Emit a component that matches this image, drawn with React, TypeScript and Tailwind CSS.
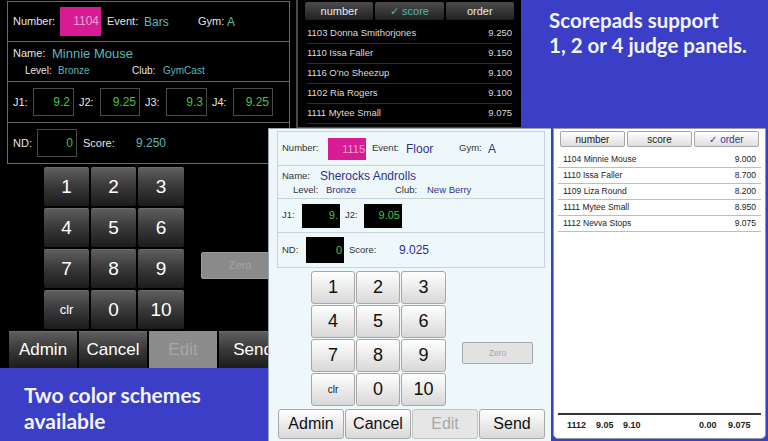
import React from "react";

const darkKey =
  "flex items-center justify-center rounded-[2px] border-t border-[#6e6e6e] bg-linear-to-b from-[#5e5e5e] via-[#383838] to-[#1c1c1c] text-white";
const lightKey =
  "flex items-center justify-center rounded-[3px] border border-[#a8a8a8] bg-linear-to-b from-white to-[#d8d8d8] text-[#111]";

const darkList = [
  ["1103 Donna Smithorjones", "9.250"],
  ["1110 Issa Faller", "9.150"],
  ["1116 O'no Sheezup", "9.100"],
  ["1102 Ria Rogers", "9.100"],
  ["1111 Mytee Small", "9.075"],
];

const lightList = [
  ["1104 Minnie Mouse", "9.000"],
  ["1110 Issa Faller", "8.700"],
  ["1109 Liza Round", "8.200"],
  ["1111 Mytee Small", "8.950"],
  ["1112 Nevva Stops", "9.075"],
];

const keys = ["1", "2", "3", "4", "5", "6", "7", "8", "9", "clr", "0", "10"];

function DarkBox({ value, w }: { value: string; w: string }) {
  return (
    <div className={`${w} h-[28px] border border-[#4a4a4a] bg-black pr-[3px] text-right text-[12px] leading-[26px] text-[#46c046]`}>
      {value}
    </div>
  );
}

function DarkPad() {
  return (
    <div className="absolute left-0 top-0 h-[368px] w-[296px] bg-black font-['Liberation_Sans',sans-serif]">
      {/* form */}
      <div className="ml-[7px] mt-[1px] w-[283px] border border-[#6a6a6a] text-[11px] text-[#e6e6e6]">
        <div className="flex h-[40px] items-center border-b border-[#6a6a6a] pl-[5px]">
          <span className="w-[47px]">Number:</span>
          <div className="h-[29px] w-[41px] bg-[#d81b95] pr-[2px] text-right text-[12px] leading-[29px] text-[#eea6cc]">1104</div>
          <span className="ml-[6px] w-[37px]">Event:</span>
          <span className="w-[54px] text-[12px] text-[#5ab8bc]">Bars</span>
          <span className="w-[29px]">Gym:</span>
          <span className="text-[12px] text-[#5ab8bc]">A</span>
        </div>
        <div className="flex h-[40px] flex-col border-b border-[#6a6a6a] pl-[5px] pt-[2px]">
          <div className="flex h-[19px] items-center">
            <span className="w-[39px]">Name:</span>
            <span className="text-[13px] text-[#5ab8bc]">Minnie Mouse</span>
          </div>
          <div className="flex h-[15px] items-center pl-[12px] text-[10px]">
            <span className="w-[33px]">Level:</span>
            <span className="w-[74px] text-[#5ab8bc]">Bronze</span>
            <span className="w-[31px]">Club:</span>
            <span className="text-[#5ab8bc]">GymCast</span>
          </div>
        </div>
        <div className="flex h-[41px] items-center border-b border-[#6a6a6a] pl-[5px]">
          <span className="w-[20px]">J1:</span>
          <DarkBox value="9.2" w="w-[41px]" />
          <span className="ml-[5px] w-[21px]">J2:</span>
          <DarkBox value="9.25" w="w-[40px]" />
          <span className="ml-[5px] w-[21px]">J3:</span>
          <DarkBox value="9.3" w="w-[41px]" />
          <span className="ml-[5px] w-[21px]">J4:</span>
          <DarkBox value="9.25" w="w-[40px]" />
        </div>
        <div className="flex h-[40px] items-center pl-[5px]">
          <span className="w-[24px]">ND:</span>
          <DarkBox value="0" w="w-[40px]" />
          <span className="ml-[6px] w-[53px]">Score:</span>
          <span className="text-[12px] text-[#5ab8bc]">9.250</span>
        </div>
      </div>

      {/* keypad */}
      <div className="mt-[3px] flex pl-[44px]">
        <div className="grid grid-cols-[45px_45px_46px] gap-[2px]">
          {keys.map((k) => (
            <div key={k} className={`${darkKey} h-[39px] ${k === "clr" ? "text-[13px]" : "text-[19px]"}`}>
              {k}
            </div>
          ))}
        </div>
        <div className="ml-[17px] mt-[85px] flex h-[27px] w-[78px] items-center justify-center rounded-[2px] border border-[#9a9a9a] bg-[#8a8a8a] text-[11px] text-[#a4a4a4]">
          Zero
        </div>
      </div>

      <div className="mt-[2px] flex gap-[2px] pl-[9px]">
        {["Admin", "Cancel", "Edit", "Send"].map((b) => (
          <div
            key={b}
            className={
              b === "Edit"
                ? "flex h-[37px] w-[68px] items-center justify-center bg-[#8c8c8c] text-[17px] text-[#a6a6a6]"
                : `${darkKey} h-[37px] w-[68px] rounded-none text-[17px]`
            }
          >
            {b}
          </div>
        ))}
      </div>
    </div>
  );
}

function DarkList() {
  return (
    <div className="absolute left-[296px] top-0 h-[127px] w-[225px] border-l-2 border-[#4a4a4a] bg-black font-['Liberation_Sans',sans-serif]">
      <div className="mx-[7px] mt-[2px] flex h-[18px] gap-[2px]">
        {["number", "✓ score", "order"].map((t) => (
          <div
            key={t}
            className={`flex flex-1 items-center justify-center rounded-[2px] bg-linear-to-b from-[#4c4c4c] to-[#222] text-[11px] ${
              t.startsWith("✓") ? "text-[#4fb8b4]" : "text-[#e8e8e8]"
            }`}
          >
            {t}
          </div>
        ))}
      </div>
      <div className="mt-[4px] px-[9px]">
        {darkList.map(([n, s]) => (
          <div key={n} className="flex h-[20px] items-center justify-between border-b border-[#2c2c2c] text-[9.5px] text-[#dcdcdc]">
            <span>{n}</span>
            <span>{s}</span>
          </div>
        ))}
      </div>
    </div>
  );
}

function LightBox({ value, w, h }: { value: string; w: string; h: string }) {
  return (
    <div className={`${w} ${h} flex items-center justify-end bg-black pr-[2px] text-[11px] text-[#46c046]`}>{value}</div>
  );
}

function LightPad() {
  return (
    <div className="absolute left-[268px] top-[128px] h-[313px] w-[283px] border-l border-t border-[#9aa6aa] bg-[#eef8fb] font-['Liberation_Sans',sans-serif]">
      <div className="ml-[8px] mt-[2px] w-[268px] border border-[#c6d3d7] text-[9.5px] text-[#333]">
        <div className="flex h-[34px] items-center border-b border-[#c6d3d7] pl-[4px]">
          <span className="w-[46px]">Number:</span>
          <div className="h-[22px] w-[38px] bg-[#d81b95] pr-[1px] text-right text-[11px] leading-[22px] text-[#eea6cc]">1115</div>
          <span className="ml-[6px] w-[34px]">Event:</span>
          <span className="w-[53px] text-[12px] text-[#2d3290]">Floor</span>
          <span className="w-[29px]">Gym:</span>
          <span className="text-[12px] text-[#2d3290]">A</span>
        </div>
        <div className="flex h-[33px] flex-col border-b border-[#c6d3d7] pl-[4px] pt-[2px]">
          <div className="flex h-[16px] items-center">
            <span className="w-[38px]">Name:</span>
            <span className="text-[12px] text-[#2d3290]">Sherocks Androlls</span>
          </div>
          <div className="flex h-[13px] items-center pl-[11px]">
            <span className="w-[33px]">Level:</span>
            <span className="w-[69px] text-[#2d3290]">Bronze</span>
            <span className="w-[32px]">Club:</span>
            <span className="text-[#2d3290]">New Berry</span>
          </div>
        </div>
        <div className="flex h-[34px] items-center border-b border-[#c6d3d7] pl-[4px]">
          <span className="w-[20px]">J1:</span>
          <LightBox value="9." w="w-[38px]" h="h-[24px]" />
          <span className="ml-[5px] w-[19px]">J2:</span>
          <LightBox value="9.05" w="w-[38px]" h="h-[24px]" />
        </div>
        <div className="flex h-[34px] items-center pl-[4px]">
          <span className="w-[24px]">ND:</span>
          <LightBox value="0" w="w-[38px]" h="h-[26px]" />
          <span className="ml-[5px] w-[50px]">Score:</span>
          <span className="text-[12px] text-[#2d3290]">9.025</span>
        </div>
      </div>

      <div className="mt-[3px] flex pl-[42px]">
        <div className="grid grid-cols-[44px_44px_45px] gap-[1px]">
          {keys.map((k) => (
            <div key={k} className={`${lightKey} h-[33px] ${k === "clr" ? "text-[10px]" : "text-[18px]"}`}>
              {k}
            </div>
          ))}
        </div>
        <div className="ml-[16px] mt-[71px] flex h-[22px] w-[71px] items-center justify-center rounded-[2px] border border-[#a8a8a8] bg-[#e2e2e2] text-[8.5px] text-[#a8a8a8]">
          Zero
        </div>
      </div>

      <div className="mt-[3px] flex gap-[1px] pl-[9px]">
        {["Admin", "Cancel", "Edit", "Send"].map((b) => (
          <div
            key={b}
            className={
              b === "Edit"
                ? "flex h-[30px] w-[66px] items-center justify-center rounded-[3px] border border-[#c4c4c4] bg-[#e6e6e6] text-[16px] text-[#a8a8a8]"
                : `${lightKey} h-[30px] w-[66px] text-[16px]`
            }
          >
            {b}
          </div>
        ))}
      </div>
    </div>
  );
}

function LightList() {
  return (
    <div className="absolute left-[553px] top-[128px] flex h-[311px] w-[213px] flex-col rounded-b-[5px] border border-[#9a9a9a] bg-white font-['Liberation_Sans',sans-serif]">
      <div className="mx-[6px] mt-[2px] flex h-[16px] gap-[2px]">
        {["number", "score", "✓ order"].map((t) => (
          <div
            key={t}
            className={`flex flex-1 items-center justify-center rounded-[2px] border border-[#a6a6a6] bg-linear-to-b from-white to-[#dedede] text-[10px] ${
              t.startsWith("✓") ? "text-[#2d3a9a]" : "text-[#222]"
            }`}
          >
            {t}
          </div>
        ))}
      </div>
      <div className="mt-[5px] px-[4px]">
        {lightList.map(([n, s]) => (
          <div key={n} className="flex h-[16px] items-center justify-between border-b border-[#bdbdbd] px-[5px] text-[8.5px] text-[#222]">
            <span>{n}</span>
            <span>{s}</span>
          </div>
        ))}
      </div>
      <div className="flex-1" />
      <div className="mx-[4px] mb-[1px] flex h-[24px] items-center border-t-2 border-[#333] pl-[9px] text-[9px] font-bold text-[#222]">
        <span className="w-[29px]">1112</span>
        <span className="w-[27px]">9.05</span>
        <span className="w-[76px]">9.10</span>
        <span className="w-[29px]">0.00</span>
        <span>9.075</span>
      </div>
    </div>
  );
}

export default function App() {
  return (
    <div className="relative h-[441px] w-[768px] overflow-hidden bg-[#3b3ec6]">
      <DarkPad />
      <DarkList />
      <LightPad />
      <LightList />
      <div className="absolute left-[549px] top-[8px] font-['Lato',sans-serif] text-[20.5px] font-bold leading-[25px] text-[#f4f4fb]">
        <div>Scorepads support</div>
        <div>1, 2 or 4 judge panels.</div>
      </div>
      <div className="absolute left-[24px] top-[382px] font-['Lato',sans-serif] text-[21px] font-bold leading-[26px] text-[#f4f4fb]">
        <div>Two color schemes</div>
        <div>available</div>
      </div>
    </div>
  );
}
